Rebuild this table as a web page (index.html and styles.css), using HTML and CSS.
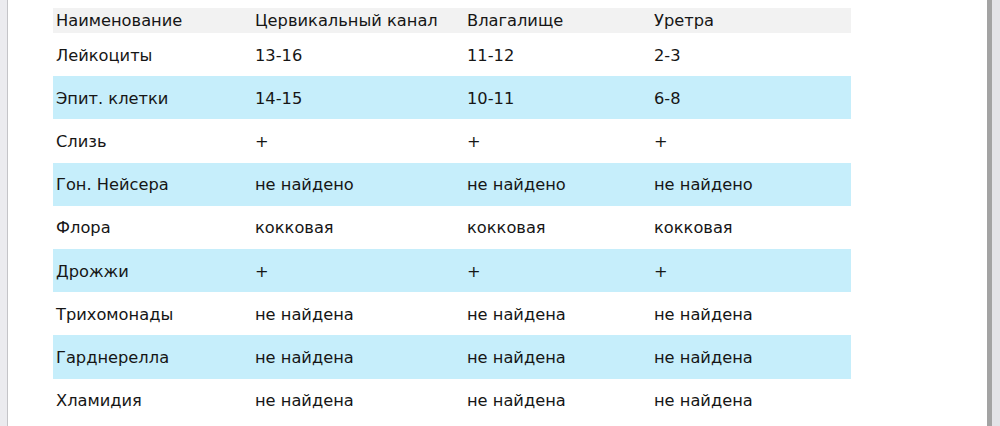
FILE: index.html
```html
<!DOCTYPE html>
<html lang="ru">
<head>
<meta charset="utf-8">
<link rel="stylesheet" href="styles.css">
</head>
<body>
<div class="frame">
  <div class="edge-left"></div>
  <main class="page">
    <table class="results">
      <colgroup>
        <col class="c1"><col class="c2"><col class="c3"><col class="c4">
      </colgroup>
      <thead>
        <tr><th>Наименование</th><th>Цервикальный канал</th><th>Влагалище</th><th>Уретра</th></tr>
      </thead>
      <tbody>
        <tr><td>Лейкоциты</td><td>13-16</td><td>11-12</td><td>2-3</td></tr>
        <tr class="alt"><td>Эпит. клетки</td><td>14-15</td><td>10-11</td><td>6-8</td></tr>
        <tr><td>Слизь</td><td>+</td><td>+</td><td>+</td></tr>
        <tr class="alt"><td>Гон. Нейсера</td><td>не найдено</td><td>не найдено</td><td>не найдено</td></tr>
        <tr><td>Флора</td><td>кокковая</td><td>кокковая</td><td>кокковая</td></tr>
        <tr class="alt"><td>Дрожжи</td><td>+</td><td>+</td><td>+</td></tr>
        <tr><td>Трихомонады</td><td>не найдена</td><td>не найдена</td><td>не найдена</td></tr>
        <tr class="alt"><td>Гарднерелла</td><td>не найдена</td><td>не найдена</td><td>не найдена</td></tr>
        <tr><td>Хламидия</td><td>не найдена</td><td>не найдена</td><td>не найдена</td></tr>
      </tbody>
    </table>
  </main>
  <div class="edge-right"></div>
</div>
</body>
</html>
```
FILE: styles.css
```css
html, body {
  margin: 0;
  padding: 0;
  background: #ffffff;
}
body {
  font-family: "DejaVu Sans", sans-serif;
  color: #161616;
  width: 1000px;
  height: 426px;
  overflow: hidden;
}
.frame {
  display: flex;
  height: 426px;
}
.edge-left {
  width: 7px;
  background: #ebebef;
  border-right: 1px solid #c4c4c8;
}
.page {
  flex: 1;
  padding: 8px 0 0 45px;
  background: #ffffff;
}
.edge-right {
  width: 13px;
  background: linear-gradient(to right, #a3a3a3 0, #a3a3a3 5px, #e3e3e7 5px);
}
.results {
  border-collapse: collapse;
  table-layout: fixed;
  width: 798px;
  font-size: 16.25px;
}
.c1 { width: 199px; }
.c2 { width: 212px; }
.c3 { width: 187px; }
.c4 { width: 200px; }
.results th,
.results td {
  text-align: left;
  font-weight: normal;
  padding: 1px 0 0 3px;
  white-space: nowrap;
}
.results thead tr {
  background: #f2f2f2;
  height: 25px;
}
.results thead th {
  padding-top: 0;
}
.results tbody tr {
  height: 43.2px;
}
.results tbody tr.alt {
  background: #c6eefb;
}
```
